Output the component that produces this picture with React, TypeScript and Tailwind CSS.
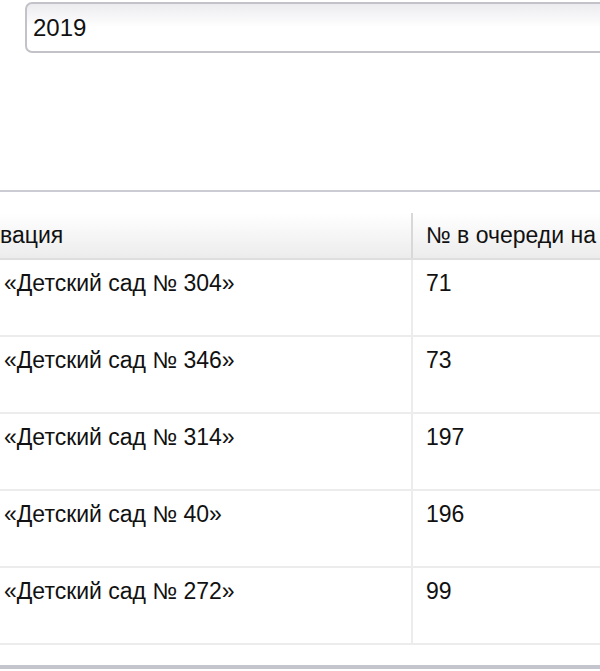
import React from "react";

const rows = [
  { name: "«Детский сад № 304»", n: "71" },
  { name: "«Детский сад № 346»", n: "73" },
  { name: "«Детский сад № 314»", n: "197" },
  { name: "«Детский сад № 40»", n: "196" },
  { name: "«Детский сад № 272»", n: "99" },
];

export default function App() {
  return (
    <div
      className="w-[600px] h-[671px] overflow-hidden bg-white text-[#111]"
      style={{ fontFamily: '"Liberation Sans", Arial, sans-serif' }}
    >
      <div className="pt-[2px] pl-[25px]">
        <div className="w-[620px] h-[51px] rounded-[7px] border-2 border-[#c2c2c8] bg-gradient-to-b from-[#ececf0] via-white to-white flex items-center pl-[6px] text-[24px]">
          2019
        </div>
      </div>
      <div className="mt-[137px] h-[2px] bg-[#cbcbd3]" />
      <div className="mt-[21px]">
        <div className="flex h-[47px] bg-gradient-to-b from-white to-[#ececec] border-b-2 border-[#dedede] text-[23px]">
          <div className="w-[413px] border-r-2 border-[#d8d8d8] flex items-center">вация</div>
          <div className="flex-1 flex items-center pl-[13px] whitespace-nowrap">№ в очереди на</div>
        </div>
        {rows.map((r) => (
          <div key={r.n} className="flex h-[77px] border-b-2 border-[#ececec] text-[23px]">
            <div className="w-[413px] border-r-2 border-[#ececec] pl-[4px] pt-[6px]">{r.name}</div>
            <div className="flex-1 pl-[13px] pt-[6px]">{r.n}</div>
          </div>
        ))}
      </div>
      <div className="mt-[20px] h-[4px] bg-[#c4c4cc]" />
    </div>
  );
}
